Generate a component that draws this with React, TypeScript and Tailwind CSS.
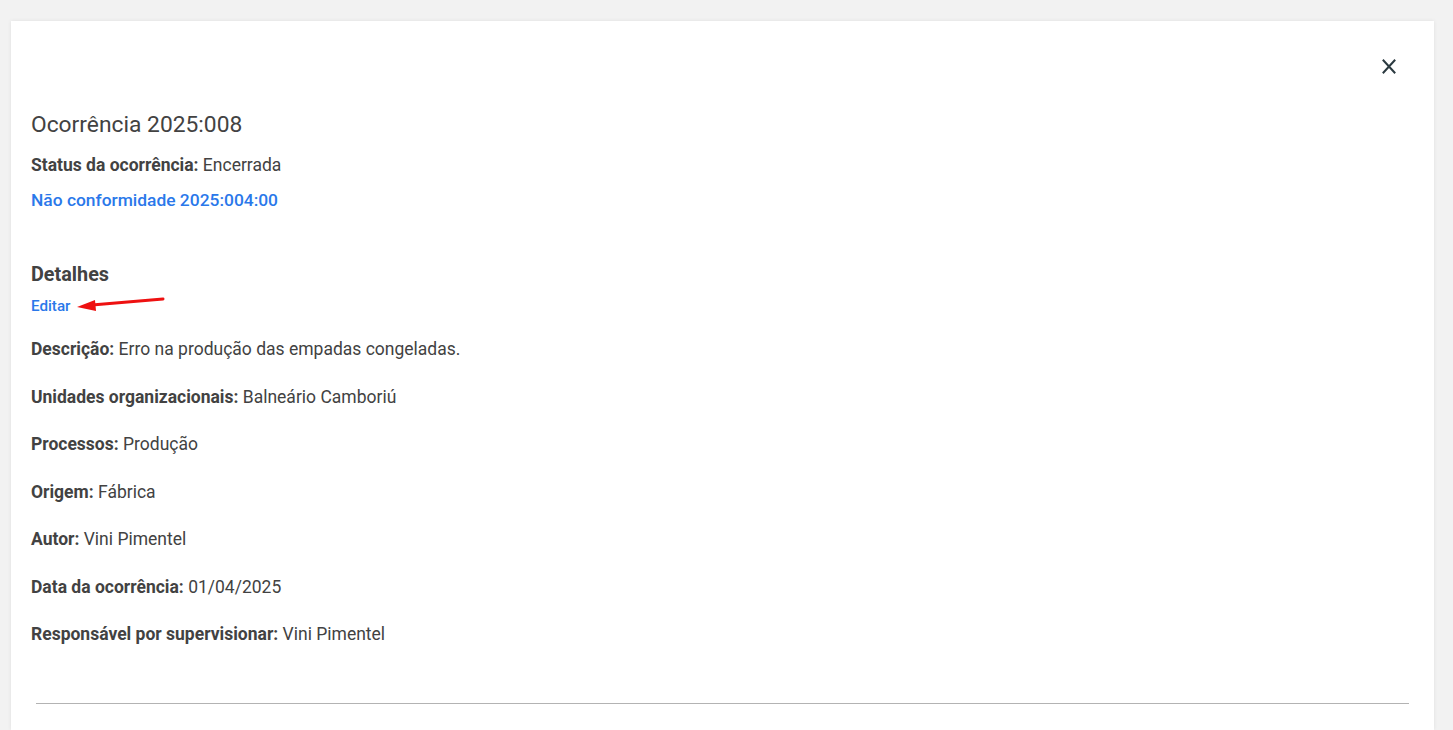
import React from "react";

const Row = ({ label, value }: { label: string; value: string }) => (
  <div className="h-[47.5px] leading-6 text-[17.5px]">
    <span className="font-bold">{label}</span> {value}
  </div>
);

export default function App() {
  return (
    <div className="min-h-[730px] bg-[#f2f2f2] pt-[21px] pl-[11px] pr-[19px] text-[#424242]" style={{ fontFamily: "Roboto, 'Noto Sans', sans-serif" }}>
      <div className="relative bg-white min-h-[709px] shadow-[0_0_4px_rgba(0,0,0,0.08)]">
        <div className="h-[88px] flex justify-end items-start pt-[38px] pr-[38px]">
          <button className="w-[14px] h-[15px] text-[#2b3a40]" aria-label="Fechar">
            <svg width="14" height="15" viewBox="0 0 14 15" fill="none" stroke="currentColor" strokeWidth="2" strokeLinecap="square">
              <path d="M1.5 1.5 L12.5 13.5 M12.5 1.5 L1.5 13.5" />
            </svg>
          </button>
        </div>
        <div className="pl-[20px]">
          <h1 className="text-[22.8px] leading-8 font-normal">Ocorrência 2025:008</h1>
          <div className="mt-[12px] text-[17.5px] leading-6">
            <span className="font-bold">Status da ocorrência:</span> Encerrada
          </div>
          <div className="mt-[11px] text-[17.4px] leading-6 font-medium text-[#2a78ea]">
            Não conformidade 2025:004:00
          </div>
          <h2 className="mt-[49px] text-[19.8px] leading-7 font-bold">Detalhes</h2>
          <div className="mt-[7px] text-[15.2px] leading-5 font-medium text-[#2a78ea]">Editar</div>
          <div className="mt-[21px]">
            <Row label="Descrição:" value="Erro na produção das empadas congeladas." />
            <Row label="Unidades organizacionais:" value="Balneário Camboriú" />
            <Row label="Processos:" value="Produção" />
            <Row label="Origem:" value="Fábrica" />
            <Row label="Autor:" value="Vini Pimentel" />
            <Row label="Data da ocorrência:" value="01/04/2025" />
            <Row label="Responsável por supervisionar:" value="Vini Pimentel" />
          </div>
        </div>
        <div className="mx-[25px] mt-[33px] border-t border-[#b3b3b3]" />
        <svg className="absolute left-[53px] top-[274px]" width="104" height="20" viewBox="0 0 104 20">
          <path d="M99 4 L28 10" stroke="#ee1111" strokeWidth="3" strokeLinecap="round" />
          <path d="M13 12 L31 5 L32 16 Z" fill="#ee1111" />
        </svg>
      </div>
    </div>
  );
}
